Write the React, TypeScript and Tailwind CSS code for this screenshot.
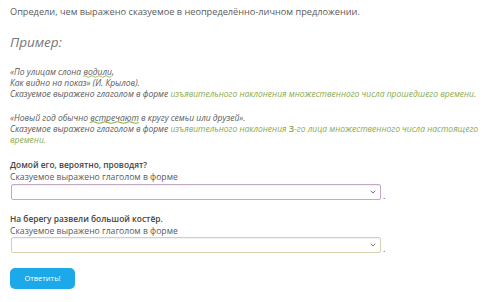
import { ChevronDown } from "lucide-react";

const green = "text-[#88ab4c]";

const Wavy = ({ children }: { children: string }) => (
  <span className="relative inline-block">
    {children}
    <svg
      className="absolute left-0 bottom-[-1px] w-full h-[3px]"
      viewBox="0 0 40 3"
      preserveAspectRatio="none"
    >
      <path
        d="M0 1.5 Q2.5 0 5 1.5 T10 1.5 T15 1.5 T20 1.5 T25 1.5 T30 1.5 T35 1.5 T40 1.5"
        fill="none"
        stroke="#8ab04e"
        strokeWidth="1"
      />
    </svg>
  </span>
);

const SelectBox = ({ border }: { border: string }) => (
  <div className="flex items-end">
    <div
      className={`w-[370px] h-[16px] ml-[1px] rounded-[2px] border bg-white shadow-[inset_0_1px_1px_rgba(0,0,0,0.06)] flex items-center justify-end pr-[3px] ${border}`}
    >
      <ChevronDown className="w-[8px] h-[8px] text-[#777]" strokeWidth={3} />
    </div>
    <span className="ml-[2px] text-[9px] leading-[9px]">.</span>
  </div>
);

const App = () => {
  return (
    <div className="w-[500px] h-[302px] bg-white pl-[10px] pt-[6px] font-['Open_Sans',sans-serif] text-[#5a5a5a] overflow-hidden">
      <p className="text-[9.2px] leading-[12px] whitespace-nowrap">
        Определи, чем выражено сказуемое в неопределённо-личном предложении.
      </p>

      <p className="mt-[14px] text-[13.5px] leading-[20px] italic text-[#777]">Пример:</p>

      <div className="mt-[14px] text-[8.5px] leading-[11px] italic whitespace-nowrap">
        <p>
          «По улицам слона <Wavy>водили</Wavy>,
        </p>
        <p>Как видно на показ» (И. Крылов).</p>
        <p>
          Сказуемое выражено глаголом в форме{" "}
          <span className={green}>
            изъявительного наклонения множественного числа прошедшего времени.
          </span>
        </p>
      </div>

      <div className="mt-[13px] text-[8.5px] leading-[11px] italic whitespace-nowrap">
        <p>
          «Новый год обычно <Wavy>встречают</Wavy> в кругу семьи или друзей».
        </p>
        <p>
          Сказуемое выражено глаголом в форме{" "}
          <span className={green}>
            изъявительного наклонения <span className="not-italic text-[9.5px] font-semibold">3</span>-го лица
            множественного числа настоящего
          </span>
        </p>
        <p className={green}>времени.</p>
      </div>

      <p className="mt-[14px] text-[8.4px] leading-[12px] font-semibold text-[#444]">
        Домой его, вероятно, проводят?
      </p>
      <p className="text-[8.6px] leading-[12px]">Сказуемое выражено глаголом в форме</p>
      <div className="mt-[1px]">
        <SelectBox border="border-[#c4a9c4]" />
      </div>

      <p className="mt-[13px] text-[8.4px] leading-[12px] font-semibold text-[#444]">
        На берегу развели большой костёр.
      </p>
      <p className="text-[8.6px] leading-[12px]">Сказуемое выражено глаголом в форме</p>
      <SelectBox border="border-[#d6d2ad]" />

      <button className="mt-[15px] w-[65px] h-[21px] rounded-[5px] bg-[#1ba9e9] text-white text-[7.5px] flex items-center justify-center">
        Ответить!
      </button>
    </div>
  );
};

export default App;
